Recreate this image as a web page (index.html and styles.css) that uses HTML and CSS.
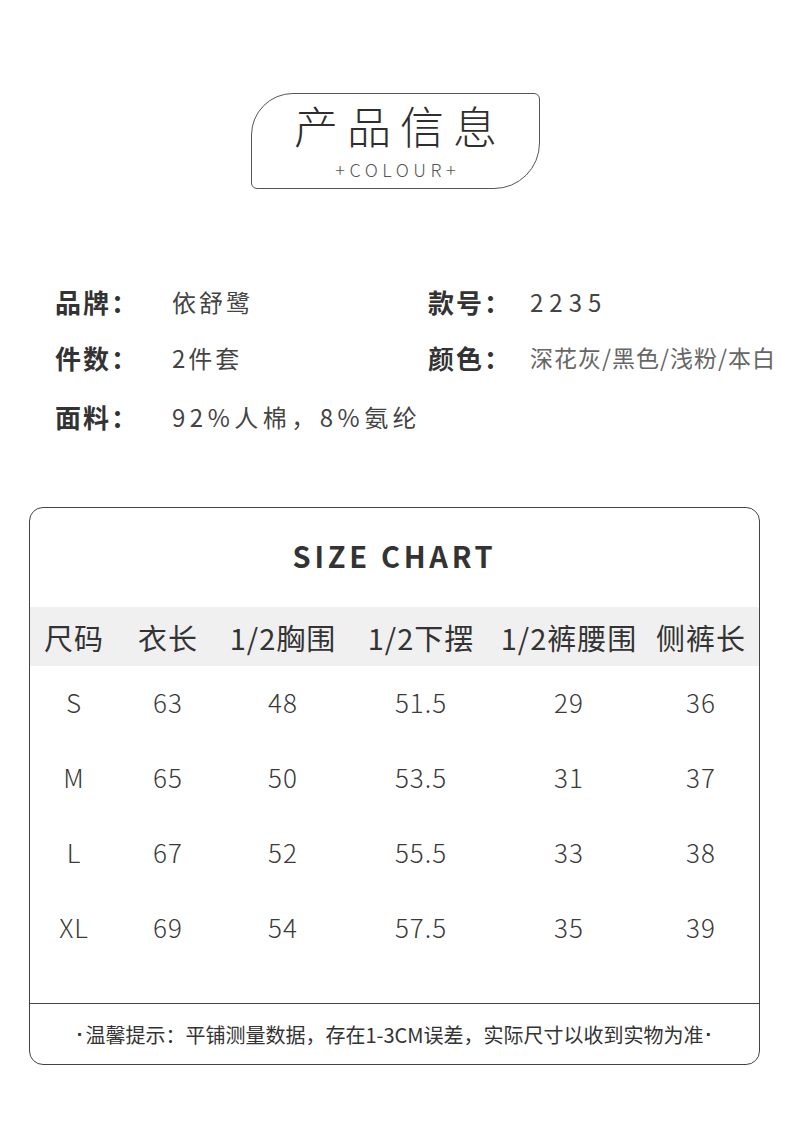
FILE: index.html
```html
<!DOCTYPE html>
<html lang="zh">
<head>
<meta charset="utf-8">
<link rel="stylesheet" href="styles.css">
</head>
<body>
<div class="page">
  <div class="title-box">
    <div class="title-cn">产品信息</div>
    <div class="title-en">+COLOUR+</div>
  </div>

  <div class="info">
    <div class="info-item"><span class="lbl">品牌：</span><span class="val">依舒鹭</span></div>
    <div class="info-item right"><span class="lbl">款号：</span><span class="val num">2235</span></div>
    <div class="info-item"><span class="lbl">件数：</span><span class="val">2件套</span></div>
    <div class="info-item right"><span class="lbl">颜色：</span><span class="val small">深花灰/黑色/浅粉/本白</span></div>
    <div class="info-item last"><span class="lbl">面料：</span><span class="val wide">92%人棉，8%氨纶</span></div>
  </div>

  <div class="card">
    <div class="card-title">SIZE CHART</div>
    <div class="grid head">
      <div>尺码</div><div>衣长</div><div>1/2胸围</div><div>1/2下摆</div><div>1/2裤腰围</div><div>侧裤长</div>
    </div>
    <div class="grid row">
      <div>S</div><div>63</div><div>48</div><div>51.5</div><div>29</div><div>36</div>
    </div>
    <div class="grid row">
      <div>M</div><div>65</div><div>50</div><div>53.5</div><div>31</div><div>37</div>
    </div>
    <div class="grid row">
      <div>L</div><div>67</div><div>52</div><div>55.5</div><div>33</div><div>38</div>
    </div>
    <div class="grid row">
      <div>XL</div><div>69</div><div>54</div><div>57.5</div><div>35</div><div>39</div>
    </div>
    <div class="spacer"></div>
    <div class="note"><span class="dot">·</span>温馨提示：平铺测量数据，存在1-3CM误差，实际尺寸以收到实物为准<span class="dot">·</span></div>
  </div>
</div>
</body>
</html>
```

FILE: styles.css
```css
* { box-sizing: border-box; }
html, body { margin: 0; padding: 0; background: #fff; }
body {
  font-family: "Noto Sans CJK SC", "Noto Sans", sans-serif;
  color: #333;
  width: 790px;
}
.page {
  padding-top: 93px;
  padding-bottom: 68px;
}
.title-box {
  margin-left: 251px;
  width: 289px;
  height: 96px;
  border: 1px solid #555;
  border-radius: 42px 6px 46px 6px;
  display: flex;
  flex-direction: column;
  align-items: center;
}
.title-cn {
  font-size: 44px;
  font-weight: 300;
  line-height: 1;
  letter-spacing: 9px;
  margin-right: -9px;
  margin-top: 9px;
  color: #2e2e2e;
}
.title-en {
  font-size: 18px;
  font-weight: 300;
  letter-spacing: 4.5px;
  margin-right: -4.5px;
  line-height: 1;
  margin-top: 13px;
  color: #555;
}
.info {
  margin-top: 94px;
  padding-left: 55px;
  display: grid;
  grid-template-columns: 373px 1fr;
  row-gap: 20px;
}
.info-item {
  display: flex;
  align-items: center;
  height: 36px;
  white-space: nowrap;
}
.info-item.last { margin-top: 3px; }
.lbl {
  width: 117px;
  font-size: 26px;
  font-weight: 700;
  letter-spacing: 2px;
  color: #333;
}
.right .lbl { width: 102px; }
.val {
  font-size: 24px;
  letter-spacing: 3px;
  color: #444;
}
.val.num { letter-spacing: 6px; }
.val.wide { letter-spacing: 4.5px; }
.val.small {
  font-size: 23px;
  letter-spacing: 1px;
  color: #666;
}
.card {
  margin: 73px 30px 0 29px;
  height: 558px;
  border: 1px solid #444;
  border-radius: 14px;
  display: flex;
  flex-direction: column;
  overflow: hidden;
}
.card-title {
  height: 99px;
  display: flex;
  align-items: center;
  justify-content: center;
  font-size: 29px;
  font-weight: 700;
  letter-spacing: 3.7px;
  color: #333;
  padding-bottom: 6px;
}
.grid {
  display: grid;
  grid-template-columns: 88px 100px 130px 146px 150px 114px;
  align-items: center;
  text-align: center;
  white-space: nowrap;
}
.head {
  height: 59px;
  background: #f0f0f0;
  font-size: 29px;
  letter-spacing: 1px;
  color: #333;
}
.row {
  height: 75px;
  font-size: 26px;
  font-weight: 300;
  letter-spacing: 1px;
  color: #3a3a3a;
  padding-bottom: 4px;
}
.spacer { flex: 1; }
.note {
  height: 61px;
  border-top: 1px solid #444;
  display: flex;
  align-items: center;
  justify-content: center;
  font-size: 20px;
  color: #333;
  letter-spacing: 0;
}
.dot {
  font-family: "Liberation Sans", sans-serif;
  font-weight: 700;
  padding: 0 2px;
}
```
